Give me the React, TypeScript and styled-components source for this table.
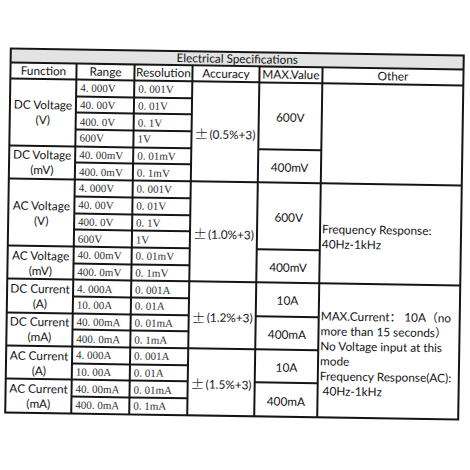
import React from "react";
import styled, { createGlobalStyle } from "styled-components";

type Group = {
  fn: [string, string];
  rows: [string, string][];
  max: string;
};

const groups: Group[] = [
  { fn: ["DC Voltage", "(V)"], rows: [["4. 000V", "0. 001V"], ["40. 00V", "0. 01V"], ["400. 0V", "0. 1V"], ["600V", "1V"]], max: "600V" },
  { fn: ["DC Voltage", "(mV)"], rows: [["40. 00mV", "0. 01mV"], ["400. 0mV", "0. 1mV"]], max: "400mV" },
  { fn: ["AC Voltage", "(V)"], rows: [["4. 000V", "0. 001V"], ["40. 00V", "0. 01V"], ["400. 0V", "0. 1V"], ["600V", "1V"]], max: "600V" },
  { fn: ["AC Voltage", "(mV)"], rows: [["40. 00mV", "0. 01mV"], ["400. 0mV", "0. 1mV"]], max: "400mV" },
  { fn: ["DC Current", "(A)"], rows: [["4. 000A", "0. 001A"], ["10. 00A", "0. 01A"]], max: "10A" },
  { fn: ["DC Current", "(mA)"], rows: [["40. 00mA", "0. 01mA"], ["400. 0mA", "0. 1mA"]], max: "400mA" },
  { fn: ["AC Current", "(A)"], rows: [["4. 000A", "0. 001A"], ["10. 00A", "0. 01A"]], max: "10A" },
  { fn: ["AC Current", "(mA)"], rows: [["40. 00mA", "0. 01mA"], ["400. 0mA", "0. 1mA"]], max: "400mA" },
];

// accuracy covers two groups each
const accuracy: Record<number, string> = {
  0: "(0.5%+3)",
  2: "(1.0%+3)",
  4: "(1.2%+3)",
  6: "(1.5%+3)",
};

// "other" blocks: start group -> [groups covered, lines]
const other: Record<number, [number, string[]]> = {
  0: [2, []],
  2: [2, ["Frequency Response:", "40Hz-1kHz"]],
  4: [4, [
    "MAX.Current： 10A（no",
    "more than 15 seconds）",
    "No Voltage input at this",
    "mode",
    "Frequency Response(AC):",
    "\u00a040Hz-1kHz",
  ]],
};

const rowCount = (from: number, n: number) =>
  groups.slice(from, from + n).reduce((s, g) => s + g.rows.length, 0);

const LINE = "#151515";
const SANS = `Lato, "Noto Sans CJK SC", "Liberation Sans", sans-serif`;

const GlobalStyle = createGlobalStyle`
  html, body {
    margin: 0;
    background: #ffffff;
  }
`;

const Page = styled.div`
  width: 470px;
  height: 470px;
  padding: 51px 0 0 7px;
  box-sizing: border-box;
  overflow: hidden;
  background: #fff;
`;

// the black background shows through the gaps as the ruling
const Sheet = styled.div`
  display: grid;
  width: 455px;
  box-sizing: border-box;
  grid-template-columns: 64px 56px 56px 65px 61px 139px;
  grid-template-rows: 12px 14px repeat(20, 14.7px);
  gap: 2px;
  padding: 2px;
  background: ${LINE};
  transform: rotate(0.88deg);
  transform-origin: center;
  font-family: ${SANS};
  font-size: 11.8px;
  color: #151515;
`;

const Cell = styled.div<{ $rows?: number }>`
  grid-row: span ${(p) => p.$rows ?? 1};
  background: #fff;
  display: flex;
  flex-direction: column;
  justify-content: center;
  white-space: nowrap;
  overflow: hidden;
`;

const Title = styled(Cell)`
  grid-column: 1 / -1;
  background: #e3e3e3;
  align-items: center;
  line-height: 12px;
`;

const Head = styled(Cell)`
  align-items: center;
  line-height: 14px;
`;

const Fn = styled(Cell)`
  align-items: center;
  line-height: 15px;
`;

const Value = styled(Cell)`
  padding-left: 3px;
  font-family: "Liberation Serif", "DejaVu Serif", serif;
  font-size: 11px;
  color: #303030;
  line-height: 12px;
`;

const Accuracy = styled(Cell)`
  flex-direction: row;
  align-items: center;
  justify-content: flex-start;
  padding: 4px 0 0 2px;
`;

const Pm = styled.span`
  font-family: "Noto Sans CJK SC", "DejaVu Sans", sans-serif;
  font-size: 14px;
  font-weight: 300;
  margin-right: 1px;
`;

const Max = styled(Cell)`
  align-items: center;
  padding-top: 2px;
`;

const Other = styled(Cell)`
  padding: 5px 0 0 1px;
  line-height: 15px;
`;

const Line = styled.span`
  display: block;
`;

export default function App() {
  const body: React.ReactNode[] = [];
  groups.forEach((g, gi) => {
    g.rows.forEach(([range, res], ri) => {
      const first = ri === 0;
      const k = `${gi}-${ri}`;
      if (first)
        body.push(
          <Fn key={`fn${k}`} $rows={g.rows.length}>
            <Line>{g.fn[0]}</Line>
            <Line>{g.fn[1]}</Line>
          </Fn>
        );
      body.push(<Value key={`r${k}`}>{range}</Value>);
      body.push(<Value key={`s${k}`}>{res}</Value>);
      if (first && accuracy[gi] !== undefined)
        body.push(
          <Accuracy key={`a${k}`} $rows={rowCount(gi, 2)}>
            <Pm>±</Pm>
            {accuracy[gi]}
          </Accuracy>
        );
      if (first)
        body.push(
          <Max key={`m${k}`} $rows={g.rows.length}>
            {g.max}
          </Max>
        );
      if (first && other[gi] !== undefined)
        body.push(
          <Other key={`o${k}`} $rows={rowCount(gi, other[gi][0])}>
            {other[gi][1].map((l, i) => (
              <Line key={i}>{l}</Line>
            ))}
          </Other>
        );
    });
  });

  return (
    <>
      <GlobalStyle />
      <Page>
        <Sheet>
          <Title>Electrical Specifications</Title>
          <Head>Function</Head>
          <Head>Range</Head>
          <Head>Resolution</Head>
          <Head>Accuracy</Head>
          <Head>MAX.Value</Head>
          <Head>Other</Head>
          {body}
        </Sheet>
      </Page>
    </>
  );
}
